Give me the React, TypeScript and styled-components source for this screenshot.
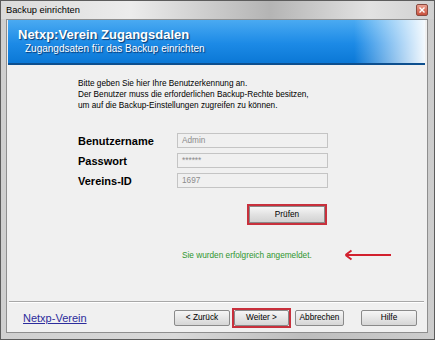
import React from 'react'
import styled, { createGlobalStyle } from 'styled-components'

const GlobalStyle = createGlobalStyle`
  html, body {
    margin: 0;
    padding: 0;
    background: #ffffff;
  }
  body {
    font-family: "Liberation Sans", Arial, sans-serif;
  }
`

const FIELDS = [
  { label: 'Benutzername', value: 'Admin' },
  { label: 'Passwort', value: '******' },
  { label: 'Vereins-ID', value: '1697' },
]

const FOOTER_BUTTONS = [
  { text: '< Zurück', width: 56, marked: false },
  { text: 'Weiter >', width: 55, marked: true },
  { text: 'Abbrechen', width: 49, marked: false },
  { text: 'Hilfe', width: 56, marked: false },
]

const App = () => {
  return (
    <>
      <GlobalStyle />
      <Window>
        <TitleBar>
          <span>Backup einrichten</span>
          <CloseButton>
            <svg width='6' height='6' viewBox='0 0 6 6'>
              <path d='M0.5 0.5 L5.5 5.5 M5.5 0.5 L0.5 5.5' stroke='#ffffff' strokeWidth='1.4' />
            </svg>
          </CloseButton>
        </TitleBar>
        <Client>
          <Header>
            <h1>Netxp:Verein Zugangsdalen</h1>
            <p>Zugangdsaten für das Backup einrichten</p>
          </Header>
          <Body>
            <Intro>
              Bitte geben Sie hier Ihre Benutzerkennung an.
              <br />
              Der Benutzer muss die erforderlichen Backup-Rechte besitzen,
              <br />
              um auf die Backup-Einstellungen zugreifen zu können.
            </Intro>
            <Form>
              {FIELDS.map((field) => (
                <FieldRow key={field.label}>
                  <Label>{field.label}</Label>
                  <Input>{field.value}</Input>
                </FieldRow>
              ))}
              <Marked $align='end'>
                <CheckButton>Prüfen</CheckButton>
              </Marked>
            </Form>
            <StatusRow>
              <Success>Sie wurden erfolgreich angemeldet.</Success>
              <svg width='48' height='12' viewBox='0 0 48 12'>
                <path d='M1.5 6 H47 M1.5 6 L7.5 1.5 M1.5 6 L7.5 10.5' stroke='#d2202e' strokeWidth='1.9' fill='none' />
              </svg>
            </StatusRow>
          </Body>
          <Separator />
          <Footer>
            <Link>Netxp-Verein</Link>
            <Buttons>
              {FOOTER_BUTTONS.map((b) =>
                b.marked ? (
                  <Marked key={b.text}>
                    <FooterButton $width={b.width}>{b.text}</FooterButton>
                  </Marked>
                ) : (
                  <FooterButton key={b.text} $width={b.width}>
                    {b.text}
                  </FooterButton>
                )
              )}
            </Buttons>
          </Footer>
        </Client>
      </Window>
    </>
  )
}

const Window = styled.div`
  width: 435px;
  height: 340px;
  box-sizing: border-box;
  display: flex;
  flex-direction: column;
  border: 1px solid #5c5c5c;
  background: linear-gradient(to right, #cfcfcf, #d9d9d9 40%, #bdbdbd 70%, #cdcdcd);
`

const TitleBar = styled.div`
  height: 18px;
  display: flex;
  align-items: center;
  justify-content: space-between;
  padding: 0 6px 0 5px;
  background: linear-gradient(to right, #dadada, #ececec 30%, #b4b4b4 62%, #e2e2e2 85%, #d0d0d0);
  span {
    font-size: 9.3px;
    color: #000000;
  }
`

const CloseButton = styled.div`
  width: 12px;
  height: 12px;
  display: flex;
  align-items: center;
  justify-content: center;
  border-radius: 2px;
  border: 1px solid #8a4a40;
  background: linear-gradient(#eca090, #c8503c);
  box-sizing: border-box;
`

const Client = styled.div`
  flex: 1;
  display: flex;
  flex-direction: column;
  margin: 0 6px 6px 5px;
  border: 1px solid #8e8e8e;
  background: #f0f0f0;
`

const Header = styled.div`
  height: 45px;
  margin: 0 2px 0 1px;
  padding: 7px 0 0 10px;
  box-sizing: border-box;
  border-bottom: 2px solid #0d4f8e;
  background: linear-gradient(to right, rgba(255, 255, 255, 0) 83%, rgba(255, 255, 255, 0.95) 100%),
    linear-gradient(#4aaaf2, #1c8ae6 55%, #0b78d6);
  color: #ffffff;
  text-shadow: 1px 1px 1px rgba(0, 20, 60, 0.7);
  h1 {
    margin: 0;
    font-size: 13px;
    font-weight: bold;
    line-height: 16px;
  }
  p {
    margin: 0 0 0 7px;
    font-size: 10px;
    line-height: 12px;
  }
`

const Body = styled.div`
  flex: 1;
  display: flex;
  flex-direction: column;
  padding: 13px 0 0 71px;
`

const Intro = styled.p`
  margin: 0;
  font-size: 8.25px;
  line-height: 11px;
  color: #000000;
`

const Form = styled.div`
  width: 250px;
  margin-top: 22px;
  display: flex;
  flex-direction: column;
  gap: 5px;
`

const FieldRow = styled.div`
  display: flex;
  align-items: center;
  height: 15px;
`

const Label = styled.div`
  width: 99px;
  font-size: 11px;
  font-weight: bold;
  color: #000000;
`

const Input = styled.div`
  width: 151px;
  height: 15px;
  box-sizing: border-box;
  padding-left: 4px;
  display: flex;
  align-items: center;
  border: 1px solid #c4c4c4;
  background: #f0f0f0;
  font-size: 8.25px;
  color: #8c8c8c;
`

const Marked = styled.div<{ $align?: string }>`
  align-self: ${(p) => (p.$align === 'end' ? 'flex-end' : 'auto')};
  margin-top: ${(p) => (p.$align === 'end' ? '11px' : '0')};
  margin-right: ${(p) => (p.$align === 'end' ? '1px' : '0')};
  border: 2px solid #c8303c;
  display: flex;
`

const CheckButton = styled.div`
  width: 76px;
  height: 17px;
  box-sizing: border-box;
  border: 1px solid #8a8a8a;
  background: linear-gradient(#f6f6f6, #e2e2e2 50%, #d2d2d2);
  display: flex;
  align-items: center;
  justify-content: center;
  font-size: 8.25px;
  color: #000000;
`

const StatusRow = styled.div`
  display: flex;
  align-items: center;
  margin-top: 24px;
  padding-left: 104px;
`

const Success = styled.span`
  width: 162px;
  font-size: 8.25px;
  line-height: 11px;
  color: #2f962f;
`

const Separator = styled.div`
  height: 0;
  margin: 0 3px 0 2px;
  border-top: 1px solid #a8a8a8;
  border-bottom: 1px solid #ffffff;
`

const Footer = styled.div`
  height: 29px;
  display: flex;
  align-items: center;
  justify-content: space-between;
  padding: 0 10px 0 16px;
`

const Link = styled.a`
  font-size: 11px;
  color: #2c2c9c;
  text-decoration: underline;
`

const Buttons = styled.div`
  display: flex;
  align-items: center;
  gap: 2px;
  & > :nth-child(3) {
    margin-left: 2px;
  }
  & > :nth-child(4) {
    margin-left: 15px;
  }
`

const FooterButton = styled.div<{ $width: number }>`
  width: ${(p) => p.$width}px;
  height: 16px;
  box-sizing: border-box;
  border: 1px solid #8a8a8a;
  border-radius: 2px;
  background: linear-gradient(#f6f6f6, #e6e6e6 50%, #d6d6d6);
  display: flex;
  align-items: center;
  justify-content: center;
  font-size: 8.25px;
  color: #000000;
`

export default App
